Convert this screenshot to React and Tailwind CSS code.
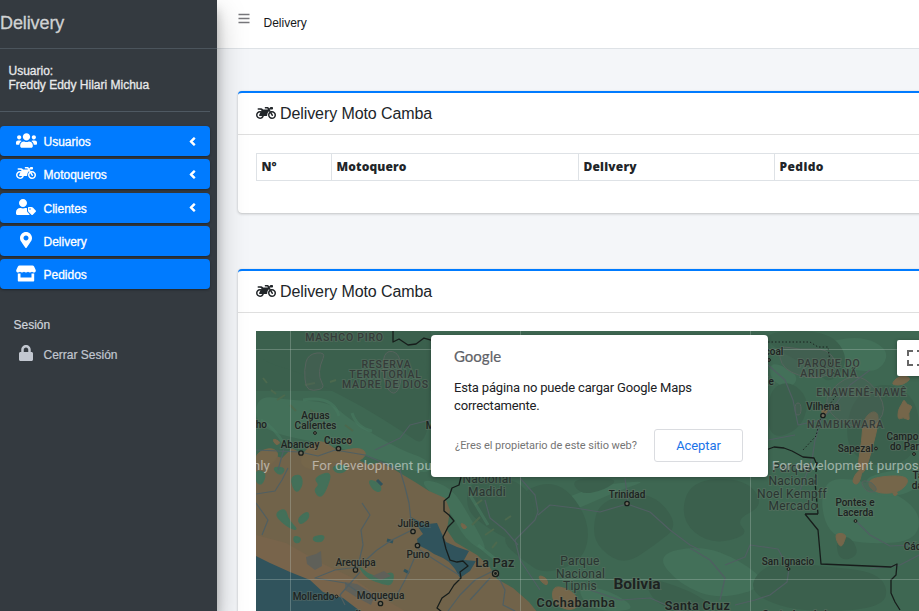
import React from "react";
import { FaUsers, FaMotorcycle, FaUserTag, FaMapMarkerAlt, FaLock, FaAngleLeft } from "react-icons/fa";

function StoreIcon() {
  return (
    <svg className="h-[17px] w-[20px]" viewBox="0 0 20 17" fill="currentColor">
      <path d="M3.500 .5h13c.7 0 1.200.3 1.600.9l1.500 3.300c.6 1.700-.3 2.900-1.600 2.900-1 0-1.500-.3-2-.8-.5.5-1.100.8-2 .8s-1.500-.3-2-.8c-.5.5-1.100.8-2 .8s-1.500-.3-2-.8c-.5.5-1.100.8-2 .8s-1.500-.3-2-.8c-.5.5-1.100.8-2 .8C.7 7.600-.2 6.400.4 4.700l1.500-3.300C2.300.8 2.800.5 3.500.5z" />
      <path d="M1.800 8.400h2.700v4h11v-4h2.700v7.100c0 .6-.4 1-1 1H2.800c-.6 0-1-.4-1-1z" />
    </svg>
  );
}

const menu = [
  { label: "Usuarios", Icon: FaUsers, size: 21, arrow: true },
  { label: "Motoqueros", Icon: FaMotorcycle, size: 20, arrow: true },
  { label: "Clientes", Icon: FaUserTag, size: 20, arrow: true },
  { label: "Delivery", Icon: FaMapMarkerAlt, size: 16, arrow: false },
  { label: "Pedidos", Icon: StoreIcon, size: 20, arrow: false },
];

function Sidebar() {
  return (
    <aside className="relative z-10 w-[217px] shrink-0 bg-[#343a40] text-[12px] text-white shadow-[0_14px_28px_rgba(0,0,0,.25),0_10px_10px_rgba(0,0,0,.22)]">
      <div className="flex h-[49px] items-center border-b border-[#4b545c] pb-[2px] text-[18px] tracking-[-0.1px] text-[#d0d2d3] [-webkit-text-stroke:0.3px]">
        Delivery
      </div>
      <div className="mr-[7px] h-[63px] border-b border-[#4f5962] pt-[15px] pl-[8.5px] leading-[14px] text-[#e8e9ea] [-webkit-text-stroke:0.3px]">
        <p>Usuario:</p>
        <p>Freddy Eddy Hilari Michua</p>
      </div>
      <nav className="mt-[14px] mr-[7px] flex flex-col gap-[3.3px]">
        {menu.map(({ label, Icon, size, arrow }) => (
          <a
            key={label}
            className="flex h-[30px] items-center rounded-[4px] bg-[#007bff] pl-[15px] shadow-[0_1px_3px_rgba(0,0,0,.12),0_1px_2px_rgba(0,0,0,.24)]"
          >
            <span className="flex w-[22px] justify-center pb-[2px]">
              <Icon size={size} />
            </span>
            <span className="ml-[6.5px] flex-1 pt-[2px] [-webkit-text-stroke:0.3px]">{label}</span>
            {arrow && <FaAngleLeft size={13} className="mr-[11px]" stroke="white" strokeWidth={22} />}
          </a>
        ))}
      </nav>
      <p className="mt-[27px] pl-[13.5px] leading-[18px] text-[#d0d4db] [-webkit-text-stroke:0.2px]">Sesión</p>
      <div className="mt-[9px] flex h-[22px] items-center pl-[15px] text-[#c2c7d0]">
        <span className="flex w-[22px] justify-center pb-[3px]">
          <FaLock size={16} />
        </span>
        <span className="ml-[6.5px] pt-[2px] [-webkit-text-stroke:0.2px]">Cerrar Sesión</span>
      </div>
    </aside>
  );
}

function Card({ className, children }) {
  return (
    <section
      className={
        "w-[900px] rounded-[4px] border-t-2 border-[#007bff] bg-white shadow-[0_0_1px_rgba(0,0,0,.125),0_1px_3px_rgba(0,0,0,.2)] " +
        className
      }
    >
      <h3 className="flex h-[42px] items-center border-b border-[#dfdfdf] pl-[18px] text-[16px] tracking-[-0.09px] text-[#212529]">
        <FaMotorcycle size={20} className="mr-[4px] mb-[2px]" />
        Delivery Moto Camba
      </h3>
      {children}
    </section>
  );
}

const dark = [
  "256,331 430,331 430,450 400,430 360,405 320,385 300,372 256,360",
  "520,490 560,480 590,520 585,560 545,575 522,560 500,540 520,520",
  "600,500 650,490 680,525 655,545 625,565 600,550 592,530",
  "470,478 520,478 538,512 520,545 490,530 465,510",
  "768,390 790,380 810,400 800,430 768,440",
  "690,480 745,478 765,505 735,520 750,535 710,545 680,520",
  "770,560 820,566 880,572 890,600 860,611 790,611 745,590",
  "835,540 850,535 860,555 840,562",
  "850,400 885,380 919,400 919,455 880,470 845,450",
  "570,478 620,478 605,490 580,495",
  "768,331 830,331 850,360 830,385 815,370 768,345",
  "640,575 690,590 720,611 660,611",
];
const light = [
  "256,395 290,400 330,402 350,420 400,450 430,460 430,476 380,460 330,445 256,430",
  "815,345 860,335 890,350 880,372 850,370 820,358",
  "530,515 560,500 600,485 650,480 620,490 570,512 540,522",
  "655,555 700,545 740,560 770,585 720,600 680,585",
  "770,360 800,375 790,390 770,380",
  "415,478 450,485 472,520 490,555 465,540 450,510",
  "820,480 860,478 919,505 919,540 870,545 825,535",
  "575,585 610,590 640,611 590,611",
  "860,480 890,470 919,470 919,490 880,500",
];
const patches = [
  "290,478 300,474 303,484 296,494",
  "314,478 332,471 326,490 320,498 314,490 320,485",
  "275,514 285,508 288,520 298,530 290,528 282,522",
  "298,518 308,511 309,518 300,525",
  "313,537 325,535 322,542 314,541",
  "294,536 301,538 299,543 294,542",
  "368,479 380,484 381,492 373,490",
  "358,565 367,574 380,578 394,571 392,585 384,584 367,578",
  "256,470 266,473 262,485 256,482",
  "272,467 286,468 280,476",
  "332,466 348,465 345,472 336,473",
];
const tan = [
  "256,453 272,447 280,455 268,467 256,465",
  "303,452 318,440 330,445 338,452 360,447 368,455 352,465 330,460 316,470 300,466",
  "272,438 281,442 276,446",
  "345,438 353,440 350,447",
  "863,420 873,410 880,416 872,450 864,475 857,470 862,440",
  "898,410 902,404 904,399 907,405 913,406 908,413 910,421 903,417 898,420",
  "892,383 900,375 912,378 903,385 894,385",
  "836,533 846,534 845,540 841,548 836,540",
  "870,478 900,475 910,480 900,492 880,494 868,487",
  "855,474 863,467 859,485 852,483",
  "553,586 566,588 576,595 580,606 568,611 552,602",
  "538,575 547,578 548,586 541,582",
  "460,522 468,527 463,530",
  "892,490 899,493 894,497",
  "820,411 828,407 826,416",
];
const roads = [
  "256,494 275,491 282,480 288,468",
  "256,503 268,520 262,535",
  "362,503 370,515 361,530 363,545 357,570",
  "405,487 409,503 412,530 392,540 377,550 358,567 335,570 315,578 345,583 370,600",
  "417,548 435,560 459,575",
  "417,552 405,580 397,595 370,600",
  "360,572 340,595 345,605",
  "256,450 300,452 318,456 335,450 365,455 400,470 405,487",
  "285,445 278,470",
  "430,420 410,425 400,438 375,450",
  "495,570 475,580 460,595 448,611",
  "495,570 505,590 503,605 515,611",
  "490,578 470,600",
  "538,512 535,520 515,540 520,560 530,575 540,590",
  "485,500 490,518 505,530 518,545",
  "538,515 550,505 575,508 600,512 627,504 650,512 670,530 690,545 700,550",
  "520,478 535,495 538,512",
  "625,478 628,502",
  "690,548 710,560 725,578 720,600",
  "725,565 745,557 750,545 778,549 789,569 787,582 770,595 755,600 735,605",
  "856,521 870,535 890,546 915,545",
  "821,420 815,440 812,460 800,490",
  "768,365 785,380 793,400 798,425 821,420",
  "795,435 768,440",
  "821,420 835,405 850,385 870,370",
  "919,555 900,565 870,569",
  "590,590 620,600 650,598 680,611",
];
const outlines = [
  "308,354 326,352 320,365 319,378 325,388 313,391 306,388 304,370",
  "385,350 400,353 402,380 396,395 387,390 382,370",
  "795,403 801,403 801,415 795,415",
  "830,390 850,375 870,380 888,410 870,430 838,422 825,405",
  "778,345 800,350 828,348 840,370 815,380 782,370",
  "860,480 873,482 878,492 866,492",
];

// Rounds a closed polygon by curving through the midpoints of its edges.
function smooth(points) {
  const p = points.split(" ").map((s) => s.split(",").map(Number));
  const mid = (a, b) => `${(a[0] + b[0]) / 2} ${(a[1] + b[1]) / 2}`;
  const start = mid(p[p.length - 1], p[0]);
  return `M${start}` + p.map((q, i) => `Q${q[0]} ${q[1]} ${mid(q, p[(i + 1) % p.length])}`).join("") + "Z";
}

function Label({ x, y, size = 10, children, weight = 500, fill = "#1d2321", spacing = 0 }) {
  return (
    <text
      x={x}
      y={y}
      fontSize={size}
      fontWeight={weight}
      fill={fill}
      letterSpacing={spacing}
      textAnchor="middle"
      stroke="#6f7a6e"
      strokeOpacity={0.35}
      strokeWidth={2}
      paintOrder="stroke"
    >
      {children}
    </text>
  );
}

const region = { size: 10.5, fill: "#343b38", spacing: 0.75 };
const park = { size: 12, weight: 400, fill: "#2a3531", spacing: 0.25 };

function MapCanvas() {
  return (
    <svg
      className="block h-[280px] w-[663px] font-[Roboto,'Liberation_Sans',sans-serif]"
      viewBox="256 331 663 280"
    >
      <rect x="256" y="331" width="663" height="280" fill="#3e6752" />
      <rect x="256" y="331" width="175" height="60" fill="#3b604d" />
      {light.map((p) => <path key={p} d={smooth(p)} fill="#437059" />)}
      {dark.map((p) => <path key={p} d={smooth(p)} fill="#3b604d" />)}
      <path
        d="M256 461l14-7 12 4 10-10 14 8 12-4 16 9 20-3 15 7 12-3 14 8 20 12 14 9 16 7 5 12 -3 20 8 12 22 13 12 11 8 13 16 9 16 14 17 21H256z"
        fill="#71634a"
      />
      <path d="M256 535l30 8 35 20 30 14 26 18 28 16H330L256 560z" fill="#78644b" />
      <path d="M263 378l4 5M271 390l5 4M305 385l10-2M330 382l6-2M290 405l6 6M310 410l8 5M285 395l-8 5M345 425l8 6M475 505l7-5M472 525l8-8M485 535l9-6M492 548l5-6M505 520l6-4M480 490l-5 4" stroke="#4c694e" strokeWidth="2" />
      <path d="M261 420q12 6 24 25M303 400q30-5 36 16M352 413q5 15 20 18M470 495l18 30M478 545l22 18" stroke="#477a60" strokeOpacity="0.6" strokeWidth="3" fill="none" />
      {patches.map((p) => <path key={p} d={smooth(p)} fill="#437059" stroke="#437059" strokeWidth="1.5" />)}
      {tan.map((p) => <path key={p} d={smooth(p)} fill="#75664a" stroke="#75664a" strokeWidth="1" />)}
      <path d="M306 557l10-3 5-3 1 15-7 4-8-6zM345 582l12 2 18 11-4 10-15-8-11-7zM372 576l12-5 7 5-10 4z" fill="#5f6059" />
      <path d="M256 556l14 7 20 9 20 8 13 12 20 6 17 13H256z" fill="#30535c" />
      <path d="M411 517l9 5 8 2 9-1 4 9 5 10 11 5 12 4-5 9 12 1-6 10-10 7-5-9-6-7-6-4-9-4-6-4-10-5-1-6 6-5z" fill="#30535c" />
      <path d="M387 540l6 2M404 570l5 3M377 480l5 5" stroke="#30535c" strokeWidth="3" />
      {outlines.map((p) => <path key={p} d={smooth(p)} fill="#4c5f54" fillOpacity="0.4" stroke="#56635d" strokeWidth="1" />)}
      <g fill="none" stroke="#505f62" strokeWidth="1.2" strokeLinejoin="round">
        {roads.map((p) => <polyline key={p} points={p} />)}
      </g>
      <g fill="none" stroke="#171d1b" strokeWidth="1.3" strokeLinejoin="round">
        <path d="M393 331v11l6-3 9 6 8-1 8-6 7 2M461 477l-2 8-7 3-3 9-5 4v10l5 4 5 6-6 6-5 10 3 12 4 11 7 2 6-1 5 5-8 6 1 6-7 7-5 8-7 5-5 10 5 4" />
        <path d="M766 450l8-3 10 1 8 3 11 6 11 1 3 7M805 514h13M805 514l13 16 3 34 70 3 6-3-1 11-5 5v13l4 9 5 8" />
        <path d="M817 462l-2 20 3 32" strokeDasharray="4 2" />
        <path d="M768 342h42l8 5h10l2 15 4 12M836 396l-15 20-5 20-13 14" strokeDasharray="1.5 2" strokeWidth="0.9" />
      </g>
      <path d="M290.5 331v280M520.5 331v280M750.5 331v280M256 349.500h663M256 579.500h663" stroke="#c5d0c9" strokeOpacity="0.3" />
      <g fill="#6f6b5b" stroke="#161c1a" strokeWidth="1.3">
        <circle cx="301" cy="453" r="2.2" />
        <circle cx="338.500" cy="448.500" r="2.2" />
        <circle cx="315" cy="433" r="1.4" strokeWidth="1" />
        <circle cx="413" cy="531.500" r="2.2" />
        <circle cx="417.500" cy="545.500" r="2.2" />
        <circle cx="355.500" cy="570" r="2.2" />
        <circle cx="336.500" cy="596.500" r="1.4" strokeWidth="1" />
        <circle cx="380.500" cy="603.500" r="2.2" />
        <circle cx="495.500" cy="573.500" r="3.1" />
        <circle cx="627" cy="503.500" r="2.2" />
        <circle cx="823" cy="415.500" r="2.2" />
        <circle cx="876" cy="448.500" r="1.4" strokeWidth="1" />
        <circle cx="914" cy="454" r="1.4" strokeWidth="1" />
        <circle cx="855.500" cy="521" r="1.4" strokeWidth="1" />
        <circle cx="788.500" cy="569" r="1.4" strokeWidth="1" />
        <circle cx="769" cy="360" r="1.4" strokeWidth="1" />
      </g>
      <circle cx="495.500" cy="573.500" r="1.400" fill="#161c1a" />
      <Label {...region} x={344.500} y={341}>MASHCO PIRO</Label>
      <Label {...region} x={386.500} y={368}>RESERVA</Label>
      <Label {...region} x={385.500} y={378}>TERRITORIAL</Label>
      <Label {...region} x={385.500} y={388}>MADRE DE DIOS</Label>
      <Label x={315.500} y={419}>Aguas</Label>
      <Label x={315.500} y={429}>Calientes</Label>
      <Label x={256} y={428}>ucho</Label>
      <Label x={300} y={448}>Abancay</Label>
      <Label x={338} y={443.500} weight={600}>Cusco</Label>
      <Label x={430} y={429}>M</Label>
      <Label x={413.500} y={527}>Juliaca</Label>
      <Label x={418} y={558}>Puno</Label>
      <Label x={355.500} y={566}>Arequipa</Label>
      <Label x={313.500} y={600}>Mollendo</Label>
      <Label x={380.500} y={599}>Moquegua</Label>
      <Label x={361} y={618}>Ilo</Label>
      <Label {...park} x={487} y={483}>Nacional</Label>
      <Label {...park} x={487} y={495.500}>Madidi</Label>
      <Label x={495} y={567} size={12.5} weight={600} spacing={0.3}>La Paz</Label>
      <Label x={627} y={498}>Trinidad</Label>
      <Label {...park} x={580} y={565}>Parque</Label>
      <Label {...park} x={580.500} y={577.500}>Nacional</Label>
      <Label {...park} x={580} y={590}>Tipnis</Label>
      <Label x={637} y={588.500} size={15.5} weight={700}>Bolivia</Label>
      <Label x={576} y={607} size={12.5} weight={600} spacing={0.5}>Cochabamba</Label>
      <Label x={697.500} y={609.500} size={12.5} weight={600} spacing={0.4}>Santa Cruz</Label>
      <Label x={800} y={618}>Santa Ana de los</Label>
      <Label x={768} y={355}>Cacoal</Label>
      <Label x={770} y={385}>le</Label>
      <Label {...region} x={829} y={367}>PARQUE DO</Label>
      <Label {...region} x={829} y={377}>ARIPUANÃ</Label>
      <Label {...region} x={861.500} y={395.500}>ENAWENÊ-NAWÊ</Label>
      <Label x={823} y={410}>Vilhena</Label>
      <Label {...region} x={845.500} y={428}>NAMBIKWARA</Label>
      <Label x={855.500} y={452}>Sapezal</Label>
      <Label x={905} y={439.500}>Campos</Label>
      <Label x={911} y={450}>do Pareci</Label>
      <Label {...park} x={792} y={472}>Parque</Label>
      <Label {...park} x={793} y={485}>Nacional</Label>
      <Label {...park} x={792} y={497.500}>Noel Kempff</Label>
      <Label {...park} x={793} y={510}>Mercado</Label>
      <Label x={855} y={506}>Pontes e</Label>
      <Label x={855.500} y={516}>Lacerda</Label>
      <Label x={788} y={565}>San Ignacio</Label>
      <Label x={922} y={550}>Cáceres</Label>
      <Label x={925} y={479}>Tang.</Label>
      <Label x={923} y={489}>da S.</Label>
      <g fill="#fff" fillOpacity="0.5" fontSize="13.33" letterSpacing="0.13">
        <text x="270" y="470" textAnchor="end">For development purposes only</text>
        <text x="312" y="470">For development purposes only</text>
        <text x="772" y="470">For development purposes only</text>
      </g>
    </svg>
  );
}

function MapDialog() {
  return (
    <div className="absolute top-[4px] left-[175px] flex h-[142px] w-[337px] flex-col rounded-[4px] bg-white pl-[23px] font-[Roboto,'Liberation_Sans',sans-serif] shadow-[0_1px_4px_rgba(0,0,0,.3)]">
      <div className="mt-[12px] font-[Lato,'Liberation_Sans',sans-serif] text-[15px] leading-[19px] text-[#5f6368] [-webkit-text-stroke:0.2px]">Google</div>
      <p className="mt-[13px] text-[13px] leading-[18px] tracking-[-0.17px] text-[#202124]">
        Esta página no puede cargar Google Maps
        <br />
        correctamente.
      </p>
      <div className="mt-[14px] flex items-center">
        <span className="w-[200px] pt-[1px] pl-[1px] text-[11px] tracking-[-0.05px] text-[#757575]">¿Eres el propietario de este sitio web?</span>
        <button className="h-[33px] w-[89px] rounded-[3px] border border-[#dadce0] text-[13px] tracking-[-0.1px] text-[#1a73e8]">Aceptar</button>
      </div>
    </div>
  );
}

const columns = [
  ["N°", "w-[75px]"],
  ["Motoquero", "w-[247px] tracking-[0.12px]"],
  ["Delivery", "w-[196px] tracking-[0.2px]"],
  ["Pedido", "w-[200px] tracking-[0.4px]"],
];

export default function App() {
  return (
    <div className="flex h-[611px] w-[919px] overflow-hidden bg-[#f4f6f9] font-['Liberation_Sans',Arial,sans-serif]">
      <Sidebar />
      <div className="min-w-0 flex-1">
        <header className="flex h-[49px] border-b border-[#dee2e6] bg-white">
          <svg className="mt-[13px] ml-[21px] h-[12px] w-[12px]" viewBox="0 0 12 12">
            <path d="M.5 1.500h11M.5 5.500h11M.5 9.500h11" stroke="#77777b" strokeWidth="1.300" />
          </svg>
          <span className="mt-[14px] ml-[13.5px] text-[12px] leading-[18px] text-[#16181b]">Delivery</span>
        </header>
        <main className="pl-[21px]">
          <Card className="mt-[42px] h-[122px]">
            <div className="mt-[18px] ml-[18px] flex h-[28px] border border-r-0 border-[#dee2e6] font-['Open_Sans','Noto_Sans',sans-serif] text-[12px] font-extrabold text-[#212529]">
              {columns.map(([name, width]) => (
                <div key={name} className={"flex shrink-0 items-center border-r border-[#dee2e6] pl-[4.5px] " + width}>
                  {name}
                </div>
              ))}
            </div>
          </Card>
          <Card className="mt-[56px] h-[500px]">
            <div className="relative mt-[18px] ml-[18px] w-[663px]">
              <MapCanvas />
              <MapDialog />
              <div className="absolute top-[9px] left-[641px] flex h-[36px] w-[40px] items-center rounded-[2px] bg-white pl-[10px] shadow-[0_1px_4px_rgba(0,0,0,.3)]">
                <svg className="h-[16px] w-[16px]" viewBox="0 0 16 16">
                  <path d="M1 6V1h5M10 1h5v5M1 10v5h5M15 10v5h-5" fill="none" stroke="#666" strokeWidth="2" />
                </svg>
              </div>
            </div>
          </Card>
        </main>
      </div>
    </div>
  );
}
